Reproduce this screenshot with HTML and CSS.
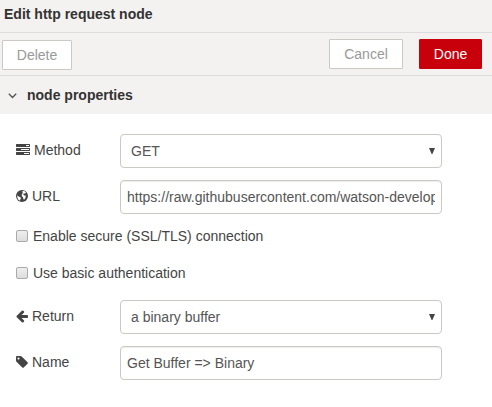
FILE: index.html
```html
<!DOCTYPE html>
<html lang="en">
<head>
<meta charset="utf-8">
<title>Edit http request node</title>
<link rel="stylesheet" href="styles.css">
</head>
<body>
<header class="title">Edit http request node</header>
<div class="toolbar">
  <button class="btn delete">Delete</button>
  <button class="btn cancel">Cancel</button>
  <button class="btn done">Done</button>
</div>
<div class="section">
  <svg class="chevron" viewBox="0 0 9 6"><path d="M.8.8 4.5 4.5 8.2.8"/></svg>
  <span>node properties</span>
</div>
<form class="form">
  <div class="row">
    <label><svg class="icon wide" viewBox="0 0 1792 1792"><path d="M1024 1408h640v-128h-640v128zm-384-512h1024v-128h-1024v128zm640-512h384v-128h-384v128zm512 832v256q0 26-19 45t-45 19h-1664q-26 0-45-19t-19-45v-256q0-26 19-45t45-19h1664q26 0 45 19t19 45zm0-512v256q0 26-19 45t-45 19h-1664q-26 0-45-19t-19-45v-256q0-26 19-45t45-19h1664q26 0 45 19t19 45zm0-512v256q0 26-19 45t-45 19h-1664q-26 0-45-19t-19-45v-256q0-26 19-45t45-19h1664q26 0 45 19t19 45z"/></svg>Method</label>
    <div class="field select"><span>GET</span><svg class="arrow" viewBox="0 0 6 6"><path d="M0 0h6L3.4 6h-.8z"/></svg></div>
  </div>
  <div class="row">
    <label><svg class="icon" viewBox="0 0 12 14"><circle cx="6" cy="7" r="6"/><path class="land" d="M6.2 2.2 8.2 2 10 3.6 9.2 4.6 7.8 4.4 7.2 5.6 8.2 6.4 9.8 6.6 9.6 8.6 8.4 10.6 7.4 10.2 7 8.2 5.8 7.2 5.8 5.4 6.8 4zM1.4 6.2 2.6 7.4 4.4 8.2 5 9.4 4.2 10.4 4 11.8 2.2 10.4 1.2 8.2z"/></svg>URL</label>
    <div class="field"><span>https://raw.githubusercontent.com/watson-developer-cloud</span></div>
  </div>
  <label class="check"><i class="box"></i>Enable secure (SSL/TLS) connection</label>
  <label class="check"><i class="box"></i>Use basic authentication</label>
  <div class="row">
    <label><svg class="icon" viewBox="128 0 1536 1792"><path d="M1664 896v128q0 53-32.5 90.5t-84.5 37.5h-704l293 294q38 36 38 90t-38 90l-75 76q-37 37-90 37-52 0-91-37l-651-652q-37-37-37-90 0-52 37-91l651-650q38-38 91-38 52 0 90 38l75 74q38 38 38 91t-38 91l-293 293h704q52 0 84.5 37.5t32.5 90.5z"/></svg>Return</label>
    <div class="field select"><span>a binary buffer</span><svg class="arrow" viewBox="0 0 6 6"><path d="M0 0h6L3.4 6h-.8z"/></svg></div>
  </div>
  <div class="row">
    <label><svg class="icon" viewBox="128 0 1536 1792"><path d="M576 448q0-53-37.5-90.5t-90.5-37.5-90.5 37.5-37.5 90.5 37.5 90.5 90.5 37.5 90.5-37.5 37.5-90.5zm1067 576q0 53-37 90l-491 492q-39 37-91 37-53 0-90-37l-715-716q-38-37-64.5-101t-26.5-117v-416q0-52 38-90t90-38h416q53 0 117 26.5t102 64.5l715 714q37 39 37 91z"/></svg>Name</label>
    <div class="field"><span>Get Buffer =&gt; Binary</span></div>
  </div>
</form>
</body>
</html>
```
FILE: styles.css
```css
* { box-sizing: border-box; }
body {
  margin: 0;
  background: #fff;
  color: #444;
  font: 14px/20px "Liberation Sans", Arial, sans-serif;
  overflow: hidden;
}
.title {
  height: 33px;
  padding: 4px 4px 0;
  border-bottom: 1px solid #ddd;
  background: #f3f2f1;
  color: #333;
  font-weight: bold;
}
.toolbar {
  display: flex;
  height: 43px;
  padding: 6px 10px 0 2px;
  border-bottom: 1px solid #ddd;
  background: #f3f2f1;
}
.btn {
  height: 30px;
  padding: 0;
  border: 1px solid #ccc9c4;
  border-radius: 1px;
  background: #fff;
  color: #999;
  font: inherit;
}
.delete { width: 70px; margin: 1px auto 0 0; }
.cancel { width: 74px; margin-right: 16px; }
.done { width: 63px; border-color: #c7000b; background: #c7000b; color: #fff; }
.section {
  display: flex;
  align-items: center;
  gap: 10px;
  height: 38px;
  padding-left: 8px;
  background: #f3f2f1;
  color: #333;
  font-weight: bold;
}
.chevron { width: 9px; height: 6px; margin-top: 1px; fill: none; stroke: #555; stroke-width: 1.4; }
.form { padding: 20px 50px 0 16px; }
.row { display: flex; height: 34px; margin-bottom: 12px; }
.row label { display: flex; align-items: center; gap: 4px; width: 104px; height: 32px; }
.icon { width: 12px; height: 14px; fill: #444; }
.icon.wide { width: 14px; }
.icon .land { fill: #fff; }
.field {
  display: flex;
  align-items: center;
  width: 322px;
  border: 1px solid #ccc9c4;
  border-radius: 4px;
  padding: 0 6px;
  color: #555;
  box-shadow: inset 0 1px 1px rgba(0, 0, 0, .075);
}
.field span { flex: 1; overflow: hidden; white-space: nowrap; }
.select { padding-left: 10px; box-shadow: none; }
.arrow { width: 6px; height: 6px; margin-bottom: 1px; fill: #444; }
.check { display: flex; align-items: center; gap: 5px; height: 20px; margin-bottom: 17px; }
.box {
  width: 12px;
  height: 12px;
  border: 1px solid #aaa;
  border-radius: 2px;
  background: linear-gradient(#eee, #ddd);
}
```
